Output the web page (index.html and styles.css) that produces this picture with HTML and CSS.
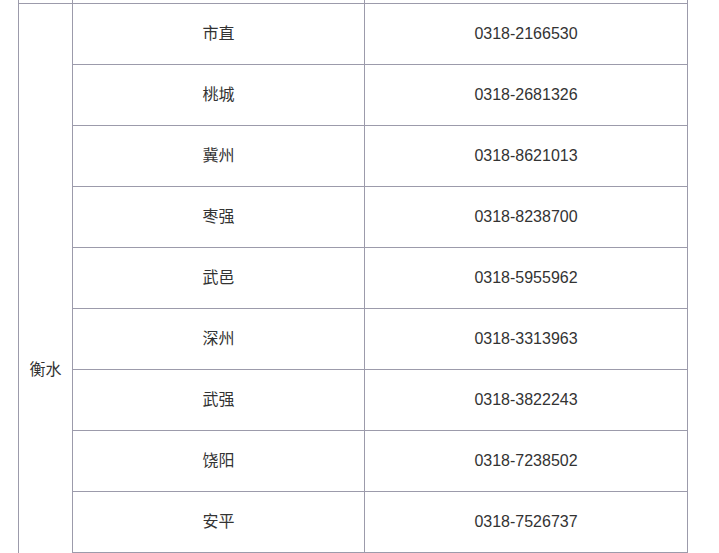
FILE: index.html
```html
<!DOCTYPE html>
<html lang="zh-CN">
<head>
<meta charset="utf-8">
<title>衡水 联系电话</title>
<link rel="stylesheet" href="styles.css">
</head>
<body>
<div class="page">
<table class="phones">
<colgroup><col class="c-city"><col class="c-county"><col class="c-phone"></colgroup>
<tbody>
<tr class="prev"><td></td><td></td><td></td></tr>
<tr><td class="city" rowspan="12">衡水</td><td>市直</td><td>0318-2166530</td></tr>
<tr><td>桃城</td><td>0318-2681326</td></tr>
<tr><td>冀州</td><td>0318-8621013</td></tr>
<tr><td>枣强</td><td>0318-8238700</td></tr>
<tr><td>武邑</td><td>0318-5955962</td></tr>
<tr><td>深州</td><td>0318-3313963</td></tr>
<tr><td>武强</td><td>0318-3822243</td></tr>
<tr><td>饶阳</td><td>0318-7238502</td></tr>
<tr><td>安平</td><td>0318-7526737</td></tr>
<tr><td></td><td></td></tr>
<tr><td></td><td></td></tr>
<tr><td></td><td></td></tr>
</tbody>
</table>
</div>
</body>
</html>
```
FILE: styles.css
```css
html, body {
  margin: 0;
  padding: 0;
  background: #ffffff;
}
body {
  font-family: "Liberation Sans", Arial, "Noto Sans CJK SC", sans-serif;
  font-size: 16px;
  color: #333333;
  overflow: hidden;
}
.page {
  padding-left: 18px;
}
.phones {
  border-collapse: collapse;
  table-layout: fixed;
  width: 669px;
  margin-top: -58px;
}
.c-city { width: 54px; }
.c-county { width: 292px; }
.c-phone { width: 323px; }
.phones td {
  border: 1px solid #9c9bab;
  height: 60px;
  padding: 0;
  text-align: center;
  vertical-align: middle;
  line-height: 20px;
}
.phones td.city {
  vertical-align: middle;
}
```
